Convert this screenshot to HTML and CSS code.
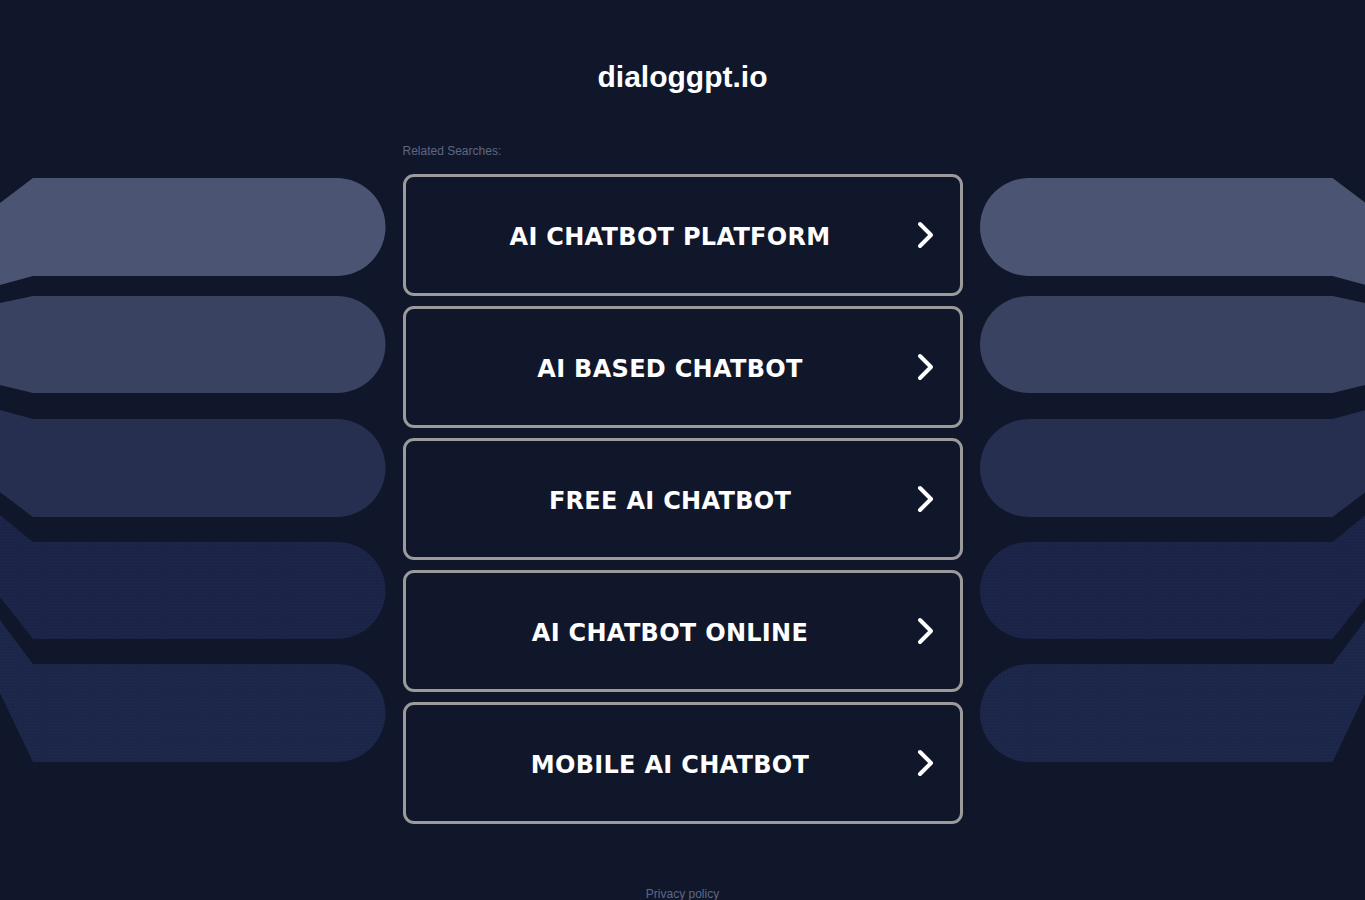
FILE: index.html
```html
<!DOCTYPE html>
<html lang="en">
<head>
    <meta charset="UTF-8">
    <meta name="viewport" content="width=device-width, initial-scale=1.0">
    <title>dialoggpt.io</title>

    <link rel="stylesheet" href="styles.css">
</head>
<body>
    <div class="header">
        <h1 class="domain">dialoggpt.io</h1>
    </div>

    <div class="related">Related Searches:</div>

    <div class="main-container">
        <div class="decor decor-left">
            <svg viewBox="0 174 386 600" preserveAspectRatio="none">
                <defs>
                    <pattern id="dots-l" width="3" height="3" patternUnits="userSpaceOnUse">
                        <rect width="1" height="1" fill="#2a3560" opacity="0.35" />
                    </pattern>
                </defs>
                <path fill="#4b5573" d="M0 203 L33 178 H337 A49 49 0 0 1 337 276 H33 L0 285 Z" />
                <path fill="#394261" d="M0 303 L33 296 H337.5 A48.5 48.5 0 0 1 337.5 393 H33 L0 385 Z" />
                <path fill="#262f4f" d="M0 410 L33 419 H337 A49 49 0 0 1 337 517 H33 L0 492 Z" />
                <path fill="#1b2446" d="M0 515 L33 542 H337.5 A48.5 48.5 0 0 1 337.5 639 H33 L0 597 Z" />
                <path fill="url(#dots-l)" d="M0 515 L33 542 H337.5 A48.5 48.5 0 0 1 337.5 639 H33 L0 597 Z" />
                <path fill="#1c2649" d="M0 620 L33 664 H337 A49 49 0 0 1 337 762 H33 L0 693 Z" />
                <path fill="url(#dots-l)" d="M0 620 L33 664 H337 A49 49 0 0 1 337 762 H33 L0 693 Z" />
            </svg>
        </div>

        <div class="search-list">
            <a href="#" class="search-item">
                <span class="search-text">AI CHATBOT PLATFORM</span>
                <svg class="chevron" viewBox="0 0 25 28"><path d="M7 3 L18 14 L7 25" /></svg>
            </a>
            <a href="#" class="search-item">
                <span class="search-text">AI BASED CHATBOT</span>
                <svg class="chevron" viewBox="0 0 25 28"><path d="M7 3 L18 14 L7 25" /></svg>
            </a>
            <a href="#" class="search-item">
                <span class="search-text">FREE AI CHATBOT</span>
                <svg class="chevron" viewBox="0 0 25 28"><path d="M7 3 L18 14 L7 25" /></svg>
            </a>
            <a href="#" class="search-item">
                <span class="search-text">AI CHATBOT ONLINE</span>
                <svg class="chevron" viewBox="0 0 25 28"><path d="M7 3 L18 14 L7 25" /></svg>
            </a>
            <a href="#" class="search-item">
                <span class="search-text">MOBILE AI CHATBOT</span>
                <svg class="chevron" viewBox="0 0 25 28"><path d="M7 3 L18 14 L7 25" /></svg>
            </a>
        </div>

        <div class="decor decor-right">
            <svg viewBox="0 174 386 600" preserveAspectRatio="none">
                <defs>
                    <pattern id="dots-r" width="3" height="3" patternUnits="userSpaceOnUse">
                        <rect width="1" height="1" fill="#2a3560" opacity="0.35" />
                    </pattern>
                </defs>
                <path fill="#4b5573" d="M0 203 L33 178 H337 A49 49 0 0 1 337 276 H33 L0 285 Z" />
                <path fill="#394261" d="M0 303 L33 296 H337.5 A48.5 48.5 0 0 1 337.5 393 H33 L0 385 Z" />
                <path fill="#262f4f" d="M0 410 L33 419 H337 A49 49 0 0 1 337 517 H33 L0 492 Z" />
                <path fill="#1b2446" d="M0 515 L33 542 H337.5 A48.5 48.5 0 0 1 337.5 639 H33 L0 597 Z" />
                <path fill="url(#dots-r)" d="M0 515 L33 542 H337.5 A48.5 48.5 0 0 1 337.5 639 H33 L0 597 Z" />
                <path fill="#1c2649" d="M0 620 L33 664 H337 A49 49 0 0 1 337 762 H33 L0 693 Z" />
                <path fill="url(#dots-r)" d="M0 620 L33 664 H337 A49 49 0 0 1 337 762 H33 L0 693 Z" />
            </svg>
        </div>
    </div>

    <div class="footer">
        <a href="#" class="privacy">Privacy policy</a>
    </div>
</body>
</html>
```

FILE: styles.css
```css
body, html {
    margin: 0;
    padding: 0;
    background-color: #11172b;
    color: #ffffff;
    font-family: "Liberation Sans", Arial, sans-serif;
}

.header {
    padding-top: 59px;
    text-align: center;
}

.domain {
    margin: 0;
    font-size: 30px;
    line-height: 36px;
    font-weight: bold;
    color: #ffffff;
}

.related {
    width: 560px;
    margin: 48px auto 0;
    font-size: 12px;
    line-height: 16px;
    color: #5d6786;
}

.main-container {
    display: grid;
    grid-template-columns: 1fr 560px 1fr;
    column-gap: 17px;
    margin-top: 15px;
}

.decor svg {
    display: block;
    width: 100%;
    height: 600px;
}

.decor-right svg {
    transform: scaleX(-1);
}

.search-list {
    display: flex;
    flex-direction: column;
    gap: 10px;
}

.search-item {
    display: flex;
    align-items: center;
    height: 122px;
    padding: 0 22px;
    box-sizing: border-box;
    border: 3px solid #9b9b9b;
    border-radius: 11px;
    text-decoration: none;
    color: #ffffff;
}

.search-text {
    flex: 1;
    padding-top: 4px;
    text-align: center;
    font-family: "DejaVu Sans", Verdana, sans-serif;
    font-weight: bold;
    font-size: 24px;
    letter-spacing: 0.3px;
}

.chevron {
    width: 25px;
    height: 28px;
    fill: none;
    stroke: #ffffff;
    stroke-width: 4;
    stroke-linecap: round;
    stroke-linejoin: round;
}

.footer {
    margin-top: 62px;
    text-align: center;
    font-size: 12px;
    line-height: 16px;
}

.privacy {
    color: #5d6786;
    text-decoration: none;
}
```
